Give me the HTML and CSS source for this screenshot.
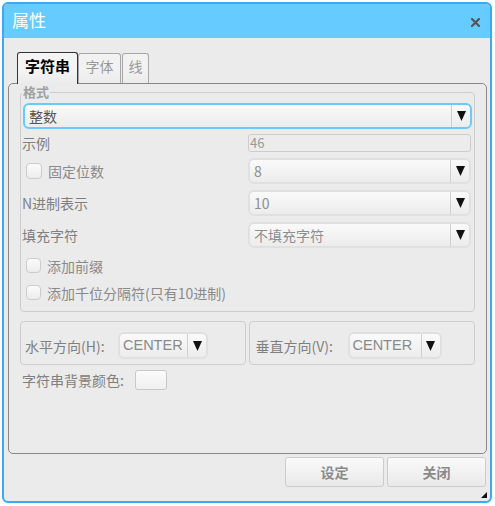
FILE: index.html
```html
<!DOCTYPE html>
<html lang="zh-CN">
<head>
<meta charset="utf-8">
<title>属性</title>
<link rel="stylesheet" href="styles.css">
</head>
<body>
<div class="dialog">
  <div class="titlebar">
    <span class="title">属性</span>
    <svg class="close" width="9" height="9" viewBox="0 0 9 9"><path d="M1 1 L8 8 M8 1 L1 8" stroke="#555" stroke-width="2.2" stroke-linecap="square"/></svg>
  </div>
  <div class="content">
    <div class="tabs">
      <div class="tab active">字符串</div>
      <div class="tab t2">字体</div>
      <div class="tab t3">线</div>
    </div>
    <div class="panel">
      <fieldset class="fmt">
        <legend>格式</legend>
        <div class="select focus wide"><span class="val dark">整数</span><span class="arrow"><svg width="9" height="10" viewBox="0 0 9 10"><polygon points="0,0 9,0 4.5,10" fill="#111"/></svg></span></div>
        <div class="grid">
          <div class="row r-sample"><span class="lbl">示例</span><div class="input">46</div></div>
          <div class="row r-sel"><label class="chk"><span class="box"></span>固定位数</label><div class="select"><span class="val">8</span><span class="arrow"><svg width="9" height="10" viewBox="0 0 9 10"><polygon points="0,0 9,0 4.5,10" fill="#111"/></svg></span></div></div>
          <div class="row r-sel"><span class="lbl">N进制表示</span><div class="select"><span class="val">10</span><span class="arrow"><svg width="9" height="10" viewBox="0 0 9 10"><polygon points="0,0 9,0 4.5,10" fill="#111"/></svg></span></div></div>
          <div class="row r-sel"><span class="lbl">填充字符</span><div class="select"><span class="val">不填充字符</span><span class="arrow"><svg width="9" height="10" viewBox="0 0 9 10"><polygon points="0,0 9,0 4.5,10" fill="#111"/></svg></span></div></div>
        </div>
        <label class="chk line first"><span class="box"></span>添加前缀</label>
        <label class="chk line"><span class="box"></span>添加千位分隔符(只有10进制)</label>
      </fieldset>
      <div class="groups">
        <div class="group gh">
          <span class="lbl glbl-h">水平方向(H):</span>
          <div class="select small sh"><span class="val en">CENTER</span><span class="arrow"><svg width="9" height="10" viewBox="0 0 9 10"><polygon points="0,0 9,0 4.5,10" fill="#111"/></svg></span></div>
        </div>
        <div class="group gv">
          <span class="lbl glbl-v">垂直方向(V):</span>
          <div class="select small sv"><span class="val en">CENTER</span><span class="arrow"><svg width="9" height="10" viewBox="0 0 9 10"><polygon points="0,0 9,0 4.5,10" fill="#111"/></svg></span></div>
        </div>
      </div>
      <div class="colorrow">
        <span class="lbl clbl">字符串背景颜色:</span>
        <span class="swatch"></span>
      </div>
    </div>
    <div class="buttons">
      <button class="btn">设定</button>
      <button class="btn">关闭</button>
    </div>
  </div>
  <svg class="grip" width="6" height="6" viewBox="0 0 6 6"><polygon points="6,0 6,6 0,6" fill="#111"/></svg>
</div>
</body>
</html>
```

FILE: styles.css
```css
html, body {
  margin: 0;
  padding: 0;
  background: #ffffff;
}
body {
  font-family: "Noto Sans CJK SC", "Liberation Sans", sans-serif;
  font-size: 14px;
  color: #808080;
}
.dialog {
  position: relative;
  box-sizing: border-box;
  margin: 2px 0 0 2px;
  width: 490px;
  height: 501px;
  border: 2px solid #3aa9f3;
  border-radius: 6px;
  background: #ebebeb;
  overflow: hidden;
}
.titlebar {
  height: 34px;
  background: #66ccff;
  display: flex;
  align-items: center;
  justify-content: space-between;
  padding: 0 10px 0 8px;
}
.title {
  color: #ffffff;
  font-size: 17px;
  line-height: 20px;
  margin-top: -2px;
}
.close {
  display: block;
  margin-top: 2px;
}
.content {
  padding: 14px 3px 0 4px;
}
.tabs {
  display: flex;
  align-items: flex-end;
  height: 31px;
  padding-left: 9px;
}
.tab {
  box-sizing: border-box;
  height: 30px;
  border: 1px solid #a8a8a8;
  border-bottom: none;
  border-radius: 3px 3px 0 0;
  background: linear-gradient(#f2f2f2, #f2f2f2 55%, #ebebeb);
  color: #999;
  font-size: 14px;
  line-height: 16px;
  padding-top: 4px;
  text-align: center;
}
.tab.active {
  position: relative;
  z-index: 1;
  height: 32px;
  margin-bottom: -1px;
  width: 61px;
  border-color: #333;
  color: #000;
  font-weight: bold;
  font-size: 15px;
  padding-top: 5px;
  background: linear-gradient(#f4f4f4, #f4f4f4 55%, #ebebeb);
}
.tab.t2 { width: 43px; }
.tab.t3 { width: 27px; margin-left: 1px; }

.panel {
  box-sizing: border-box;
  height: 371px;
  border: 1px solid #888;
  border-radius: 5px;
  padding: 1px 11px 0 11px;
}
.fmt {
  margin: 0;
  padding: 4px 2px 0 2px;
  border: 1px solid #cdcdcd;
  border-radius: 4px;
  height: 227px;
  box-sizing: border-box;
}
.fmt legend {
  padding: 0 1px;
  margin-left: -1px;
  font-size: 13px;
  line-height: 14px;
  font-weight: bold;
  color: #a0a0a0;
}
.select {
  box-sizing: border-box;
  display: flex;
  align-items: stretch;
  height: 26px;
  border: 2px solid #e0e0e0;
  border-radius: 6px;
  background: linear-gradient(#fafafa, #ececec);
}
.select.focus {
  border-color: #66ccff;
}
.select .val {
  flex: 1;
  padding-left: 4px;
  line-height: 22px;
  color: #8e8e8e;
  font-size: 14px;
  white-space: nowrap;
  overflow: hidden;
}
.select .val.dark {
  color: #555;
}
.select .arrow {
  width: 18px;
  border-left: 1px solid #cfcfcf;
  display: flex;
  align-items: center;
  justify-content: center;
}
.select .arrow svg { display: block; }

.grid {
  display: flex;
  flex-direction: column;
}
.row {
  display: grid;
  grid-template-columns: 225px 223px;
  align-items: center;
}
.r-sample {
  margin-top: 5px;
  height: 18px;
}
.r-sel {
  height: 26px;
  margin-top: 6px;
}
.r-sel:first-of-type { margin-top: 11px; }
.row .lbl {
  margin-left: -1px;
  line-height: 18px;
}
.input {
  box-sizing: border-box;
  height: 18px;
  border: 1px solid #cccccc;
  border-radius: 3px;
  background: #ececec;
  color: #999;
  font-size: 13px;
  line-height: 16px;
  padding-left: 1px;
}
.chk {
  display: flex;
  align-items: center;
  gap: 6px;
  color: #8a8a8a;
  line-height: 18px;
}
.chk .box {
  box-sizing: border-box;
  width: 16px;
  height: 16px;
  border: 1px solid #cccccc;
  border-radius: 4px;
  background: linear-gradient(#fbfbfb, #ececec);
  margin-left: 3px;
}
.chk.line {
  height: 27px;
}
.chk.line .box {
  width: 15px;
  height: 15px;
}
.chk.first { margin-top: 4px; }

.groups {
  display: flex;
  gap: 3px;
  margin-top: 9px;
}
.group {
  box-sizing: border-box;
  height: 44px;
  border: 1px solid #cdcdcd;
  border-radius: 4px;
  display: flex;
  align-items: center;
  padding-top: 5px;
}
.group .lbl {
  line-height: 18px;
}
.gh { width: 226px; padding-left: 4px; }
.gv { width: 227px; padding-left: 6px; }
.glbl-h { width: 93px; }
.glbl-v { width: 92px; }
.select.small {
  height: 27px;
}
.sh { width: 90px; }
.sv { width: 94px; }
.select .val.en {
  font-family: "Liberation Sans", sans-serif;
  font-size: 14.5px;
  padding-left: 3px;
  line-height: 23px;
  color: #8a8a8a;
}
.colorrow {
  display: flex;
  align-items: center;
  margin-top: 5px;
  margin-left: 2px;
}
.clbl {
  width: 113px;
}
.swatch {
  box-sizing: border-box;
  width: 32px;
  height: 20px;
  border: 1px solid #c8c8c8;
  border-radius: 3px;
  background: linear-gradient(#fbfbfb, #f0f0f0);
}
.buttons {
  display: flex;
  justify-content: flex-end;
  gap: 3px;
  margin-top: 3px;
  padding-right: 1px;
}
.btn {
  box-sizing: border-box;
  width: 99px;
  height: 30px;
  border: 1px solid #cccccc;
  border-radius: 3px;
  background: linear-gradient(#fafafa, #e9e9e9);
  font-family: "Noto Sans CJK SC", sans-serif;
  font-size: 14px;
  font-weight: bold;
  color: #8a8a8a;
  padding: 0;
}
.grip {
  position: absolute;
  right: 3px;
  bottom: 3px;
  display: block;
}
```
